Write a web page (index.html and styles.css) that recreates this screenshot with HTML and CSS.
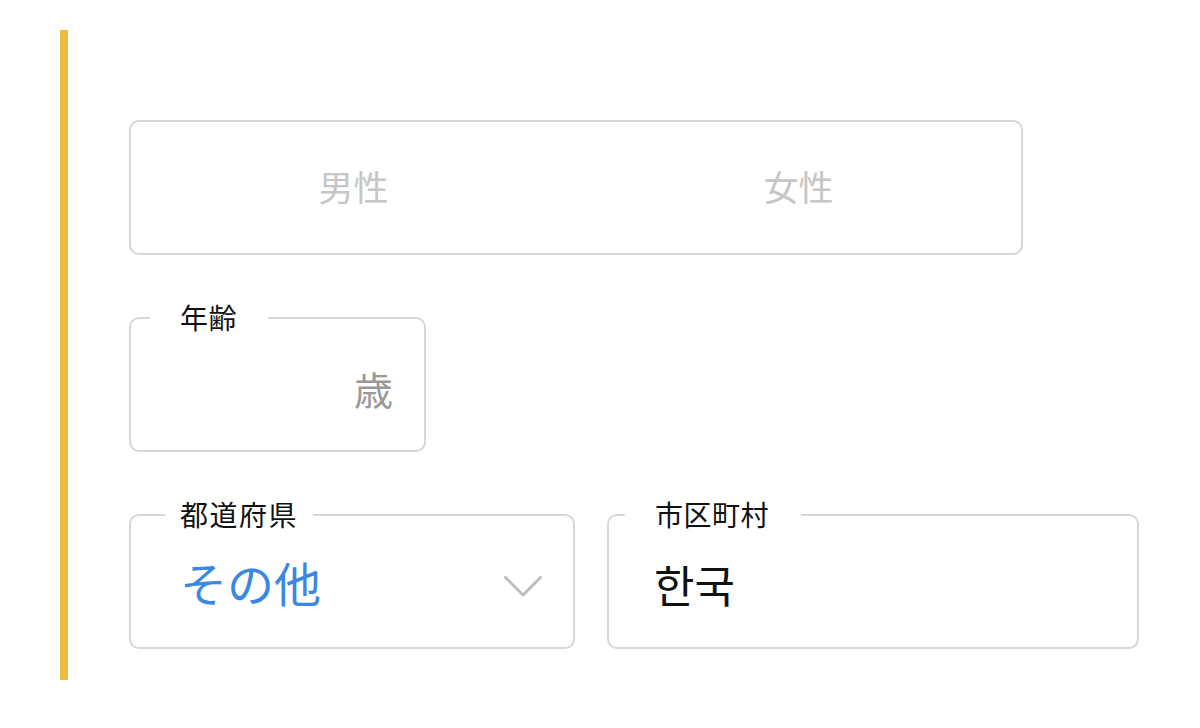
FILE: index.html
```html
<!DOCTYPE html>
<html lang="ja">
<head>
<meta charset="utf-8">
<title>Form</title>
<link rel="stylesheet" href="styles.css">
</head>
<body>
<div class="page">
  <div class="panel">
    <div class="gender">
      <div class="gender-opt">男性</div>
      <div class="gender-opt">女性</div>
    </div>
    <div class="field age">
      <span class="label label-age">年齢</span>
      <span class="unit">歳</span>
    </div>
    <div class="row">
      <div class="field pref">
        <span class="label label-pref">都道府県</span>
        <span class="value-blue">その他</span>
        <svg class="chev" width="38" height="21" viewBox="0 0 38 21"><path d="M1.5 1.5 L19 19 L36.5 1.5" fill="none" stroke="#bdbdbd" stroke-width="3" stroke-linecap="round" stroke-linejoin="round"/></svg>
      </div>
      <div class="field city">
        <span class="label label-city">市区町村</span>
        <span class="value-ko">한국</span>
      </div>
    </div>
  </div>
</div>
</body>
</html>
```

FILE: styles.css
```css
html, body {
  margin: 0;
  padding: 0;
  background: #fff;
}
body {
  font-family: "Noto Sans CJK JP", "Noto Sans", sans-serif;
}
.page {
  padding: 30px 0 0 60px;
}
.panel {
  border-left: 8px solid #ecbe3f;
  padding: 90px 0 31px 61px;
}
.gender {
  box-sizing: border-box;
  width: 894px;
  height: 135px;
  border: 2px solid #d7d7d7;
  border-radius: 10px;
  display: flex;
  padding-bottom: 5px;
}
.gender-opt {
  flex: 1;
  display: flex;
  align-items: center;
  justify-content: center;
  font-size: 35px;
  color: #c6c6c6;
  line-height: 1;
}
.field {
  position: relative;
  box-sizing: border-box;
  height: 135px;
  border: 2px solid #d7d7d7;
  border-radius: 10px;
  display: flex;
  align-items: center;
  padding-top: 8px;
}
.label {
  position: absolute;
  top: -17px;
  background: #fff;
  font-size: 28px;
  line-height: 30px;
  color: #111;
  letter-spacing: 0.5px;
}
.label-age { left: 19px; padding: 0 31px 0 30px; }
.label-pref { left: 34px; padding: 0 15px 0 15px; letter-spacing: 1.5px; }
.label-city { left: 16px; padding: 0 32px 0 30px; }
.age {
  margin-top: 62px;
  width: 297px;
  justify-content: flex-end;
  padding-right: 31px;
}
.unit {
  font-size: 39px;
  color: #999;
  line-height: 1;
}
.row {
  margin-top: 62px;
  display: flex;
  gap: 32px;
}
.pref {
  width: 446px;
  padding-left: 49px;
  padding-right: 31px;
  padding-top: 0;
  justify-content: space-between;
}
.value-blue {
  font-size: 47px;
  color: #3b87e4;
  line-height: 1;
}
.chev {
  display: block;
  margin-top: 10px;
}
.city {
  width: 532px;
  padding-left: 45px;
  padding-top: 4px;
}
.value-ko {
  font-family: "Noto Sans CJK KR", "Noto Sans CJK JP", sans-serif;
  font-size: 44px;
  color: #111;
  line-height: 1;
}
```
